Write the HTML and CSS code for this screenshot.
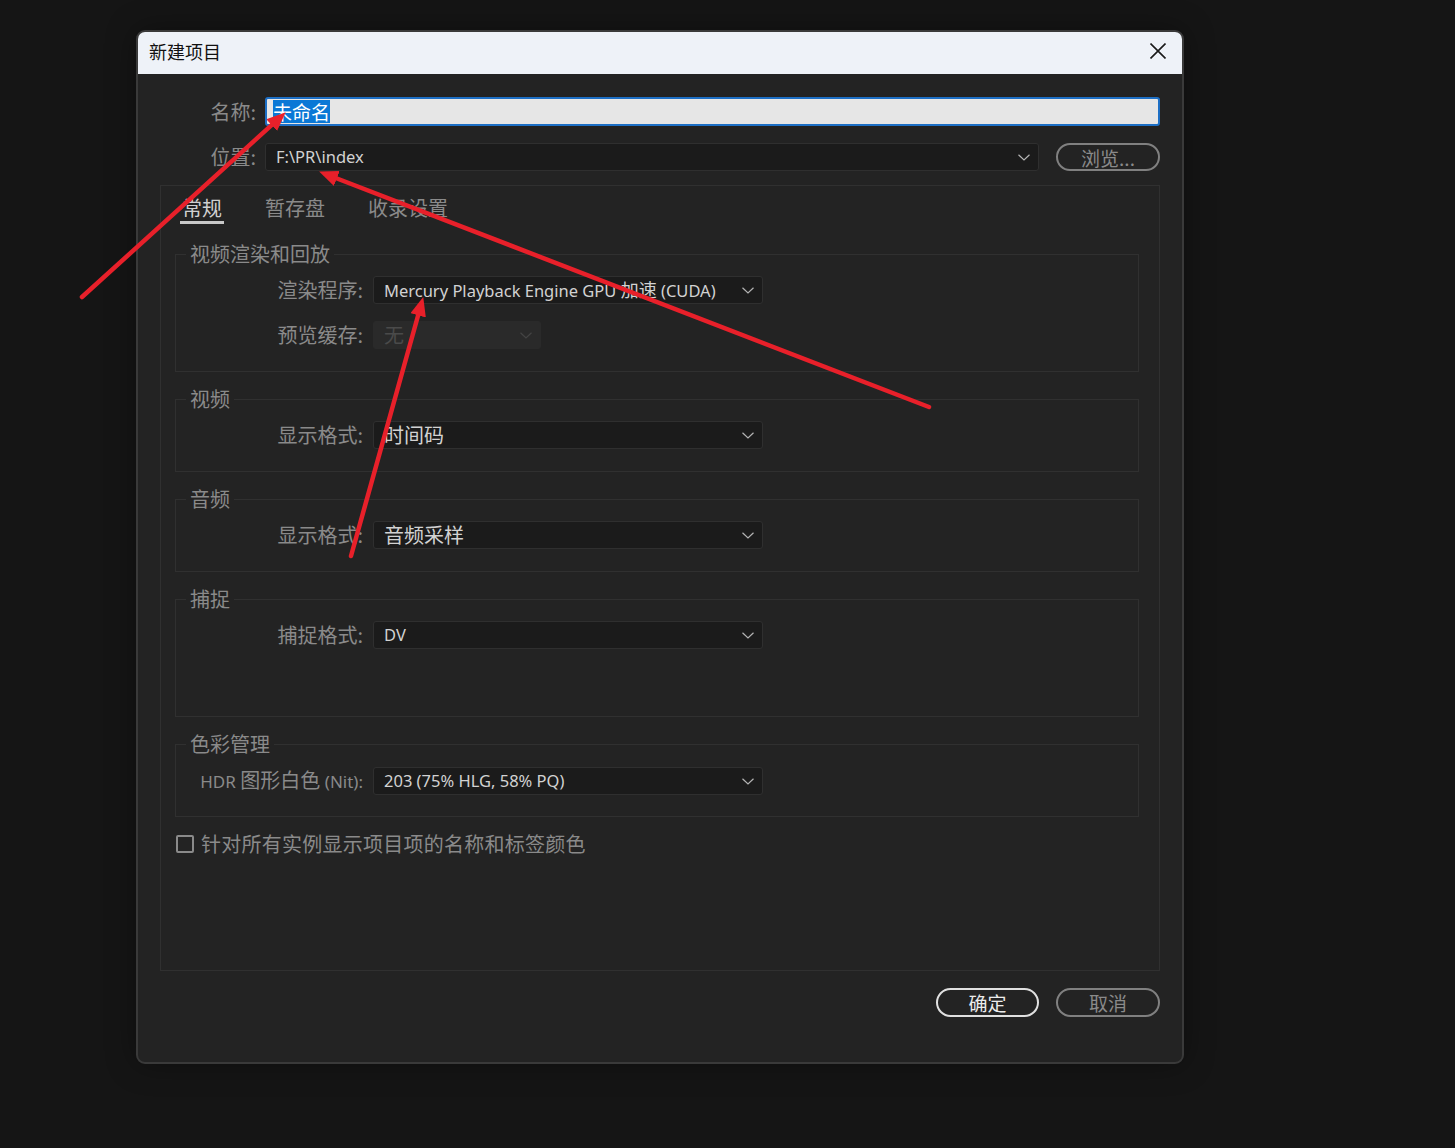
FILE: index.html
```html
<!DOCTYPE html>
<html lang="zh-CN">
<head>
<meta charset="utf-8">
<title>新建项目</title>
<link rel="stylesheet" href="styles.css">
</head>
<body>
<div class="dialog">
  <div class="titlebar">
    <span class="title">新建项目</span>
    <svg class="close" width="16" height="16" viewBox="0 0 16 16"><path d="M0.5 0.5 L15.5 15.5 M15.5 0.5 L0.5 15.5" stroke="#1a1a1a" stroke-width="1.6" fill="none"/></svg>
  </div>
  <div class="body">
    <div class="top-row">
      <span class="top-label">名称:</span>
      <div class="name-input"><span class="sel">未命名</span></div>
    </div>
    <div class="top-row loc-row">
      <span class="top-label">位置:</span>
      <div class="select loc-select"><span class="val latin">F:\PR\index</span><svg class="chev" width="12" height="7" viewBox="0 0 12 7"><path d="M0.5 0.8 L6 6 L11.5 0.8" stroke="#b4b4b4" stroke-width="1.2" fill="none"/></svg></div>
      <button class="pill browse">浏览...</button>
    </div>

    <div class="panel">
      <div class="tabs">
        <span class="tab active">常规</span>
        <span class="tab">暂存盘</span>
        <span class="tab">收录设置</span>
      </div>

      <fieldset class="group">
        <legend>视频渲染和回放</legend>
        <div class="field">
          <span class="flabel">渲染程序:</span>
          <div class="select"><span class="val latin">Mercury Playback Engine GPU <span class="cjk-s">加速</span> (CUDA)</span><svg class="chev" width="12" height="7" viewBox="0 0 12 7"><path d="M0.5 0.8 L6 6 L11.5 0.8" stroke="#b4b4b4" stroke-width="1.2" fill="none"/></svg></div>
        </div>
        <div class="field">
          <span class="flabel">预览缓存:</span>
          <div class="select disabled"><span class="val cjk">无</span><svg class="chev" width="12" height="7" viewBox="0 0 12 7"><path d="M0.5 0.8 L6 6 L11.5 0.8" stroke="#444" stroke-width="1.2" fill="none"/></svg></div>
        </div>
      </fieldset>

      <fieldset class="group">
        <legend>视频</legend>
        <div class="field">
          <span class="flabel">显示格式:</span>
          <div class="select"><span class="val cjk">时间码</span><svg class="chev" width="12" height="7" viewBox="0 0 12 7"><path d="M0.5 0.8 L6 6 L11.5 0.8" stroke="#b4b4b4" stroke-width="1.2" fill="none"/></svg></div>
        </div>
      </fieldset>

      <fieldset class="group">
        <legend>音频</legend>
        <div class="field">
          <span class="flabel">显示格式:</span>
          <div class="select"><span class="val cjk">音频采样</span><svg class="chev" width="12" height="7" viewBox="0 0 12 7"><path d="M0.5 0.8 L6 6 L11.5 0.8" stroke="#b4b4b4" stroke-width="1.2" fill="none"/></svg></div>
        </div>
      </fieldset>

      <fieldset class="group">
        <legend>捕捉</legend>
        <div class="field">
          <span class="flabel">捕捉格式:</span>
          <div class="select"><span class="val latin">DV</span><svg class="chev" width="12" height="7" viewBox="0 0 12 7"><path d="M0.5 0.8 L6 6 L11.5 0.8" stroke="#b4b4b4" stroke-width="1.2" fill="none"/></svg></div>
        </div>
        <div class="field spacer"></div>
      </fieldset>

      <fieldset class="group">
        <legend>色彩管理</legend>
        <div class="field">
          <span class="flabel"><span class="latin-l">HDR</span> 图形白色 <span class="latin-l">(Nit):</span></span>
          <div class="select"><span class="val latin">203 (75% HLG, 58% PQ)</span><svg class="chev" width="12" height="7" viewBox="0 0 12 7"><path d="M0.5 0.8 L6 6 L11.5 0.8" stroke="#b4b4b4" stroke-width="1.2" fill="none"/></svg></div>
        </div>
      </fieldset>

      <label class="check"><span class="box"></span>针对所有实例显示项目项的名称和标签颜色</label>
    </div>

    <div class="actions">
      <button class="pill primary">确定</button>
      <button class="pill">取消</button>
    </div>
  </div>
</div>

<svg class="annot" width="1455" height="1148" viewBox="0 0 1455 1148">
  <defs>
    <marker id="ah" markerUnits="userSpaceOnUse" markerWidth="20" markerHeight="18" refX="4" refY="8" orient="auto">
      <path d="M0,0 L19,8 L0,16 Z" fill="#e8202a"/>
    </marker>
  </defs>
  <g stroke="#e8202a" stroke-width="4.5" stroke-linecap="round" fill="none">
    <line x1="82" y1="297" x2="274.6" y2="122.4" marker-end="url(#ah)"/>
    <line x1="929" y1="407" x2="333.1" y2="177" marker-end="url(#ah)"/>
    <line x1="351" y1="556" x2="419.2" y2="311.5" marker-end="url(#ah)"/>
  </g>
</svg>
</body>
</html>
```

FILE: styles.css
```css
* { box-sizing: border-box; }
html, body { margin: 0; height: 100%; }
body {
  background: #151515;
  font-family: "Noto Sans CJK SC", "Noto Sans", sans-serif;
  position: relative;
  overflow: hidden;
}

.dialog {
  margin: 30px 0 0 136px;
  width: 1048px;
  height: 1034px;
  border: 2px solid #3a3a3a;
  border-radius: 9px;
  background: #232323;
  display: flex;
  flex-direction: column;
  overflow: hidden;
  box-shadow: 0 0 30px rgba(0, 0, 0, 0.35);
}

.titlebar {
  height: 42px;
  flex: none;
  background: #eef2f8;
  display: flex;
  align-items: center;
  justify-content: space-between;
  padding: 0 16px 4px 11px;
}
.title { font-size: 18px; color: #111; line-height: 24px; }
.close { display: block; }

.body {
  flex: 1;
  padding: 23px 22px 0 22px;
  display: flex;
  flex-direction: column;
}

.top-row {
  display: flex;
  align-items: center;
}
.top-label {
  width: 96px;
  margin-right: 9px;
  text-align: right;
  font-size: 20px;
  line-height: 28px;
  color: #8a8a8a;
  flex: none;
}
.name-input {
  flex: 1;
  height: 29px;
  background: #e6e6e6;
  border: 2px solid #1d6fc5;
  border-radius: 3px;
  display: flex;
  align-items: center;
  padding-left: 6px;
}
.sel {
  background: #0a78d6;
  color: #fff;
  font-size: 19px;
  line-height: 23px;
}
.loc-row { margin-top: 17px; }

.select {
  height: 28px;
  background: #1b1b1b;
  border: 1px solid #2f2f2f;
  border-radius: 3px;
  display: flex;
  align-items: center;
  justify-content: space-between;
  padding: 0 8px 0 10px;
  color: #d2d2d2;
}
.loc-select { flex: 1; }
.chev { display: block; flex: none; }
.val { white-space: nowrap; line-height: 26px; }
.latin {
  font-family: "Noto Sans", "Noto Sans CJK SC", sans-serif;
  font-size: 16.5px;
}
.cjk-s { font-family: "Noto Sans CJK SC", sans-serif; font-size: 18px; }
.cjk { font-size: 20px; }

.pill {
  height: 29px;
  border-radius: 15px;
  border: 2px solid #808080;
  background: transparent;
  color: #8a8a8a;
  font-family: "Noto Sans CJK SC", sans-serif;
  font-size: 19px;
  line-height: 1;
  padding: 0;
  width: 104px;
}
.browse { margin-left: 17px; flex: none; height: 28px; }

.panel {
  margin-top: 14px;
  height: 786px;
  flex: none;
  border: 1px solid #303030;
  padding: 9px 20px 0 14px;
}

.tabs {
  display: flex;
  gap: 39px;
  padding-left: 5px;
  margin-bottom: 17px;
}
.tab {
  font-size: 20px;
  line-height: 26px;
  padding: 0 2px;
  color: #8a8a8a;
  border-bottom: 3px solid transparent;
}
.tab.active { color: #d0d0d0; border-bottom-color: #c8c8c8; }

.group {
  margin: 0;
  padding: 9px 0 22px;
  border: 1px solid #303030;
  min-width: 0;
}
.group + .group { margin-top: 14px; }
.group legend {
  margin-left: 10px;
  padding: 0 4px;
  font-size: 20px;
  line-height: 26px;
  color: #8a8a8a;
}

.field {
  display: grid;
  grid-template-columns: 187px 390px;
  column-gap: 10px;
  align-items: center;
  height: 28px;
}
.field + .field { margin-top: 17px; }
.flabel {
  text-align: right;
  font-size: 20px;
  line-height: 28px;
  color: #8a8a8a;
  white-space: nowrap;
}
.latin-l {
  font-family: "Noto Sans", sans-serif;
  font-size: 17px;
}
.select.disabled {
  width: 168px;
  background: #2a2a2a;
  border-color: #2a2a2a;
  color: #4a4a4a;
}

.check {
  margin-top: 13px;
  margin-left: 1px;
  display: flex;
  align-items: center;
  gap: 7px;
  font-size: 20px;
  line-height: 28px;
  letter-spacing: 0.25px;
  color: #8a8a8a;
}
.box {
  width: 18px;
  height: 18px;
  border: 2px solid #8a8a8a;
  border-radius: 2px;
  flex: none;
}

.actions {
  margin-top: 17px;
  display: flex;
  justify-content: flex-end;
  gap: 17px;
}
.pill.primary {
  width: 103px;
  border-color: #e0e0e0;
  color: #ececec;
}

.annot {
  position: absolute;
  left: 0;
  top: 0;
  pointer-events: none;
}
```
